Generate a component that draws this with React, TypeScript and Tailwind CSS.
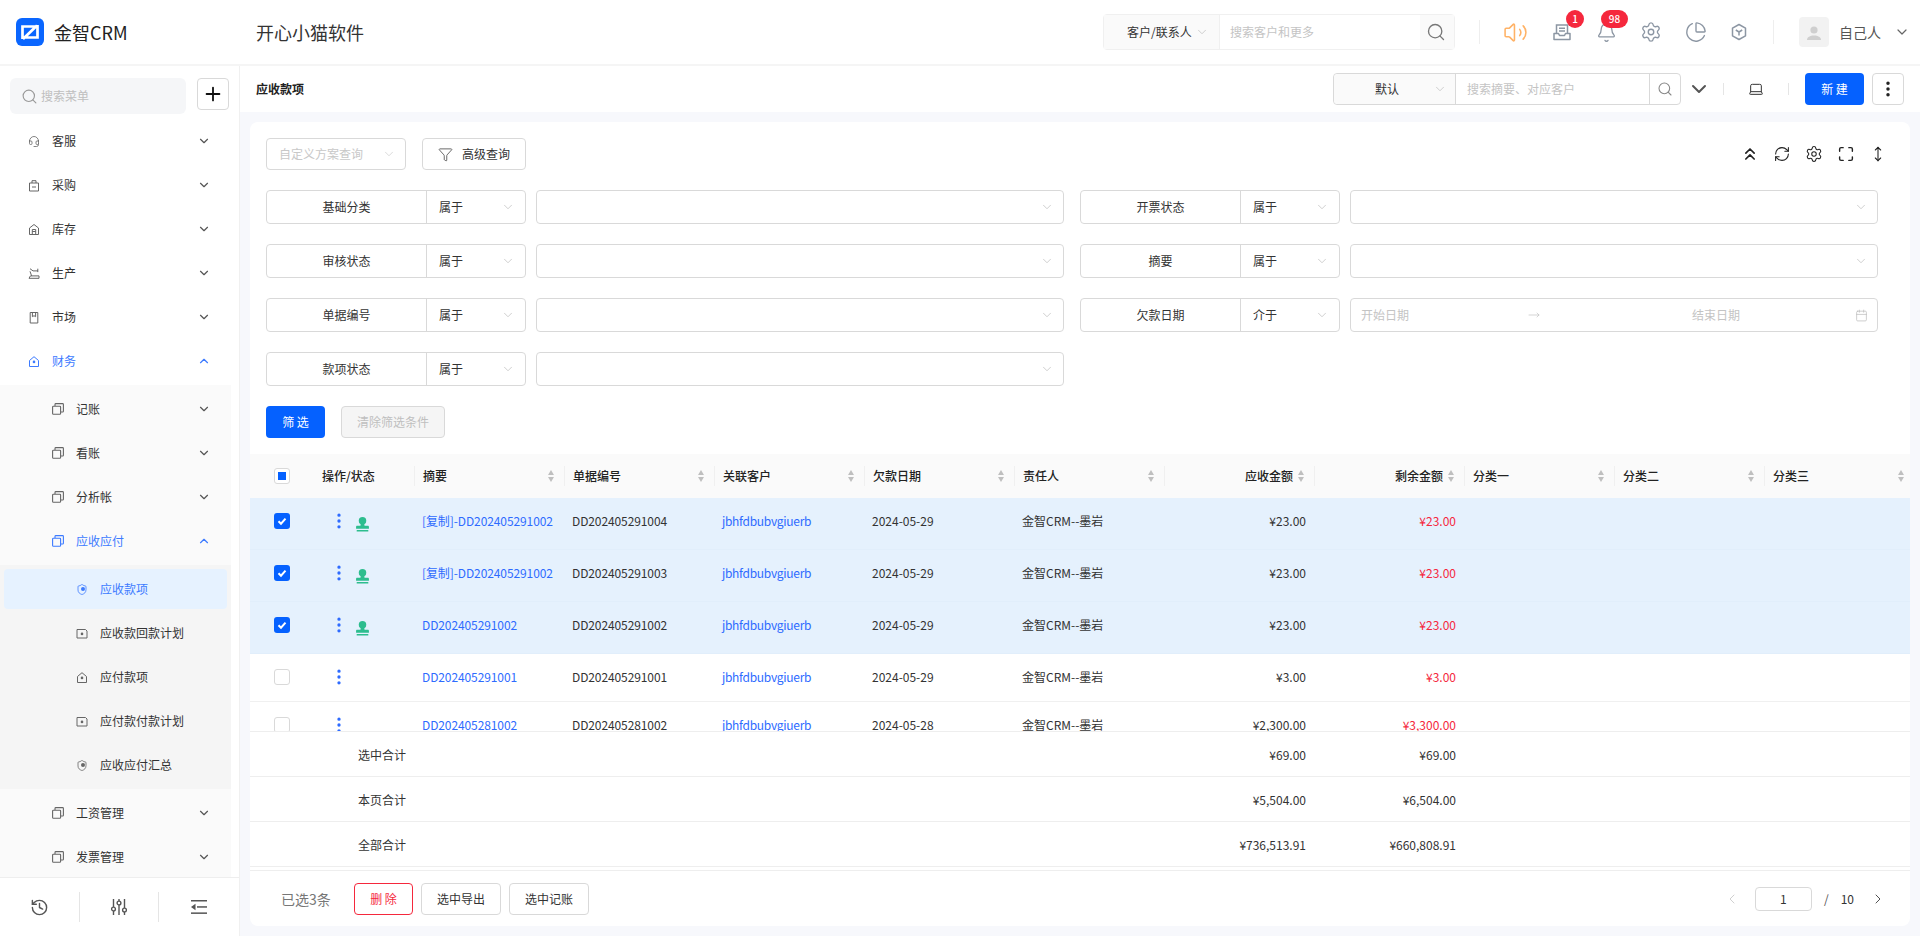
import {
  Bell,
  Calendar,
  ChevronDown,
  ChevronLeft,
  ChevronRight,
  ChevronUp,
  ChevronsUp,
  EllipsisVertical,
  Funnel,
  Headset,
  History,
  Laptop,
  Maximize,
  MoveRight,
  MoveVertical,
  PieChart,
  Plus,
  RefreshCw,
  Search,
  Settings,
  Shield,
  Volume2,
} from 'lucide-react';
import type { ReactNode } from 'react';

function MenuSvg({ d, dot }: { d: string; dot?: boolean }) {
  return (
    <svg viewBox="0 0 12 12" fill="none" stroke="currentColor" strokeWidth="1" strokeLinejoin="round" className="h-[13px] w-[13px]">
      <path d={d} />
      {dot && <circle cx="6" cy="6.4" r="1.3" fill="currentColor" stroke="none" />}
    </svg>
  );
}

const bagPath = 'M1.5 3.5h9v8h-9zM4 3.5V1.2h4v2.3M4 7.5h4';
const storePath = 'M1.5 4.5L6 1l4.5 3.5V11h-9zM4.3 11V6h3.4v5M4.3 8h3.4';
const armPath = 'M2 1.2l3 2.2h5M9.8 1.2v3.4M2 3.8l1.6 4.6M1 10.8h10V8.4H2.4z';
const marketPath = 'M2.2 1h7.6v10.5H2.2zM4.4 1v4.2L6 4.2l1.6 1V1';
const housePath = 'M1.5 5L6 1.2 10.5 5v6h-9z';
const planPath = 'M1 2h8.5L11 3.5v7H1z';

function CopyIcon({ className }: { className?: string }) {
  return (
    <svg viewBox="0 0 12 12" fill="none" stroke="currentColor" strokeWidth="1.1" className={className}>
      <rect x="0.6" y="3.2" width="8" height="8" rx="0.8" />
      <path d="M3 3V1.4c0-.4.3-.8.8-.8h6.8c.4 0 .8.4.8.8v6.8c0 .5-.4.8-.8.8H9" />
    </svg>
  );
}

function ShieldDot() {
  return (
    <div className="relative h-[13px] w-[13px]">
      <Shield className="h-full w-full" strokeWidth={1.6} />
      <span className="absolute top-[4px] left-[4.5px] h-1 w-1 rounded-full bg-current" />
    </div>
  );
}

function StampIcon() {
  return (
    <svg viewBox="0 0 12 14" fill="#2dbd8e" className="h-[15px] w-[13px]">
      <circle cx="6" cy="3.6" r="3.5" />
      <path d="M4.4 6h3.2l.3 2.2H11c.6 0 1 .4 1 1v1.8H0V9.2c0-.6.4-1 1-1h3.1z" />
      <rect x="0.5" y="12.1" width="11" height="1.5" rx="0.5" />
    </svg>
  );
}

function CubeIcon({ className }: { className?: string }) {
  return (
    <svg viewBox="0 0 18 18" fill="none" stroke="currentColor" strokeWidth="1.5" className={className}>
      <path d="M9 1.5l6.5 3.7v7.6L9 16.5l-6.5-3.7V5.2z" strokeLinejoin="round" />
      <path d="M5.8 7L9 9l3.2-2M9 9v3.5" />
    </svg>
  );
}

function InboxIcon({ className }: { className?: string }) {
  return (
    <svg viewBox="0 0 18 18" fill="none" stroke="currentColor" strokeWidth="1.5" className={className}>
      <path d="M3.5 10V2h11v8" />
      <path d="M6 5.2h6M6 8h6" />
      <path d="M1 10.5h4.5l1 2h5l1-2H17v6H1z" strokeLinejoin="round" />
    </svg>
  );
}

function SliderKnobs() {
  return (
    <svg viewBox="0 0 16 18" fill="none" stroke="currentColor" strokeWidth="1.4" className="h-[18px] w-4">
      <path d="M2.5 1v8M2.5 13v4M8 1v2M8 7v10M13.5 1v9M13.5 14v3" />
      <circle cx="2.5" cy="11" r="1.9" />
      <circle cx="8" cy="5" r="1.9" />
      <circle cx="13.5" cy="12" r="1.9" />
    </svg>
  );
}

function CollapseIcon() {
  return (
    <svg viewBox="0 0 16 14" className="h-[14px] w-4" fill="currentColor">
      <rect y="0" width="16" height="1.5" />
      <rect x="6" y="6.2" width="10" height="1.5" />
      <rect y="12.4" width="16" height="1.5" />
      <path d="M0 7l4.5-3.2v6.4z" />
    </svg>
  );
}

function Logo() {
  return (
    <svg viewBox="0 0 28 28" className="h-7 w-7">
      <rect width="28" height="28" rx="6" fill="#0a66ff" />
      <path d="M6.5 21V8.5h13M21.5 7v12.5H9M21 7.5L7 21" fill="none" stroke="#fff" strokeWidth="2.7" />
    </svg>
  );
}

function SortIcon() {
  return (
    <span className="flex w-[7px] shrink-0 flex-col gap-[2px]">
      <span className="h-0 w-0 border-x-[3.5px] border-b-[5px] border-x-transparent border-b-[#bfbfbf]" />
      <span className="h-0 w-0 border-x-[3.5px] border-t-[5px] border-x-transparent border-t-[#bfbfbf]" />
    </span>
  );
}

type SideItem = { label: string; icon: ReactNode; open?: boolean; active?: boolean };

const topMenu: SideItem[] = [
  { label: '客服', icon: <Headset className="h-[13px] w-[13px]" strokeWidth={1.6} /> },
  { label: '采购', icon: <MenuSvg d={bagPath} /> },
  { label: '库存', icon: <MenuSvg d={storePath} /> },
  { label: '生产', icon: <MenuSvg d={armPath} /> },
  { label: '市场', icon: <MenuSvg d={marketPath} /> },
];

const deepMenu: SideItem[] = [
  { label: '应收款项', icon: <ShieldDot />, active: true },
  { label: '应收款回款计划', icon: <MenuSvg d={planPath} dot /> },
  { label: '应付款项', icon: <MenuSvg d={housePath} dot /> },
  { label: '应付款付款计划', icon: <MenuSvg d={planPath} dot /> },
  { label: '应收应付汇总', icon: <ShieldDot /> },
];

function MenuRow({ item, indent, open, active }: { item: SideItem; indent: string; open?: boolean; active?: boolean }) {
  const Chevron = open ? ChevronUp : ChevronDown;
  return (
    <div className={`flex h-11 w-[231px] shrink-0 items-center ${indent} ${active ? 'text-[#3d7bff]' : 'text-[#333]'}`}>
      <span className={`flex w-[12px] justify-center ${active ? '' : 'text-[#666]'}`}>{item.icon}</span>
      <span className="ml-[12px]">{item.label}</span>
      <Chevron className={`ml-auto mr-[20px] h-[14px] w-[14px] ${active ? '' : 'text-[#555]'}`} strokeWidth={2} />
    </div>
  );
}

function Sidebar() {
  return (
    <aside className="flex w-[240px] shrink-0 flex-col border-r border-[#f0f0f0] bg-white">
      <div className="flex h-[53px] shrink-0 items-start gap-[11px] pt-3 pl-[10px]">
        <div className="flex h-9 w-[176px] items-center gap-[3px] rounded-md bg-[#f5f6f8] pl-[11px] text-[#bfbfbf]">
          <Search className="h-[17px] w-[17px] text-[#999]" strokeWidth={1.6} />
          <span>搜索菜单</span>
        </div>
        <div className="flex h-8 w-8 items-center justify-center rounded border border-[#d9d9d9]">
          <Plus className="h-[22px] w-[22px] text-[#111]" strokeWidth={2} />
        </div>
      </div>
      <div className="h-[758px] overflow-hidden">
        {topMenu.map((m) => (
          <MenuRow key={m.label} item={m} indent="pl-[28px]" />
        ))}
        <MenuRow item={{ label: '财务', icon: <MenuSvg d={housePath} dot /> }} indent="pl-[28px]" open active />
        <div className="mt-[2px] w-[231px] bg-[#fafafa] py-[2px]">
          {['记账', '看账', '分析帐'].map((label) => (
            <MenuRow key={label} item={{ label, icon: <CopyIcon className="h-3 w-3" /> }} indent="pl-[52px]" />
          ))}
          <MenuRow item={{ label: '应收应付', icon: <CopyIcon className="h-3 w-3" /> }} indent="pl-[52px]" open active />
          <div className="my-[2px] bg-[#f5f5f5] py-[2px]">
            {deepMenu.map((m) => (
              <div key={m.label} className="relative">
                {m.active && <div className="absolute inset-x-[4px] top-[2px] bottom-[2px] rounded bg-[#e6f2ff]" />}
                <div className={`relative flex h-11 items-center pl-[76px] ${m.active ? 'text-[#3d7bff]' : 'text-[#333]'}`}>
                  <span className={`flex w-[12px] justify-center ${m.active ? '' : 'text-[#666]'}`}>{m.icon}</span>
                  <span className="ml-[12px]">{m.label}</span>
                </div>
              </div>
            ))}
          </div>
          {['工资管理', '发票管理'].map((label) => (
            <MenuRow key={label} item={{ label, icon: <CopyIcon className="h-3 w-3" /> }} indent="pl-[52px]" />
          ))}
        </div>
      </div>
      <div className="grid h-[59px] grid-cols-3 items-center border-t border-[#eee] text-[#555]">
        <div className="flex h-[30px] items-center justify-center border-r border-[#e5e5e5]">
          <History className="h-[19px] w-[19px]" strokeWidth={1.8} />
        </div>
        <div className="flex h-[30px] items-center justify-center border-r border-[#e5e5e5]">
          <SliderKnobs />
        </div>
        <div className="flex h-[30px] items-center justify-center">
          <CollapseIcon />
        </div>
      </div>
    </aside>
  );
}

function TopBar() {
  return (
    <header className="flex h-[66px] shrink-0 items-center border-b-2 border-[#f5f5f5] bg-white">
      <div className="ml-4 flex w-[240px] items-center gap-[10px]">
        <Logo />
        <span className="text-[18px] text-[#222]">金智CRM</span>
      </div>
      <span className="text-[18px] text-[#333]">开心小猫软件</span>
      <div className="ml-auto flex h-9 w-[352px] rounded-sm border border-[#f0f0f0]">
        <div className="flex w-[115px] items-center bg-[#fafafa] pl-[23px] text-[#333]">
          <span>客户/联系人</span>
          <ChevronDown className="ml-[3px] h-[14px] w-[14px] text-[#bbb]" strokeWidth={1.2} />
        </div>
        <div className="flex flex-1 items-center border-l border-[#f0f0f0] pl-[10px] text-[#c4c4c4]">搜索客户和更多</div>
        <div className="flex w-[34px] items-center justify-center bg-[#fafafa] pr-[2px]">
          <Search className="h-[20px] w-[20px] text-[#777]" strokeWidth={1.6} />
        </div>
      </div>
      <span className="ml-[24px] h-6 w-px bg-[#eee]" />
      <Volume2 className="ml-[23px] h-[25px] w-[25px] text-[#ffb266]" strokeWidth={1.5} />
      <div className="relative ml-[25px]">
        <InboxIcon className="h-[18px] w-[18px] text-[#8c96a3]" />
        <span className="absolute -top-[13px] left-[13px] flex h-[18px] w-[18px] items-center justify-center rounded-full bg-[#f5283d] text-[10px] font-medium text-white">
          1
        </span>
      </div>
      <div className="relative ml-[25px]">
        <Bell className="h-[21px] w-[21px] text-[#8c96a3]" strokeWidth={1.5} />
        <span className="absolute -top-[12px] left-[5px] flex h-[18px] w-[27px] items-center justify-center rounded-full bg-[#f5283d] text-[10px] font-medium text-white">
          98
        </span>
      </div>
      <Settings className="ml-[23px] h-[22px] w-[22px] text-[#8c96a3]" strokeWidth={1.5} />
      <PieChart className="ml-[23px] h-[22px] w-[22px] text-[#8c96a3]" strokeWidth={1.5} />
      <CubeIcon className="ml-[23px] h-[18px] w-[18px] text-[#8c96a3]" />
      <span className="ml-[25px] h-6 w-px bg-[#eee]" />
      <div className="ml-[25px] flex h-[30px] w-[30px] items-end justify-center rounded bg-[#f2f2f2] pb-[6px]">
        <svg viewBox="0 0 16 16" fill="#cfcfcf" className="h-4 w-4">
          <circle cx="8" cy="5" r="3.6" />
          <path d="M1 15c0-3 3-4.6 7-4.6s7 1.6 7 4.6z" />
        </svg>
      </div>
      <span className="ml-[10px] text-sm text-[#555]">自己人</span>
      <ChevronDown className="ml-[13px] mr-[10px] h-[16px] w-[16px] text-[#666]" strokeWidth={1.8} />
    </header>
  );
}

function ToolBar() {
  return (
    <div className="flex h-[46px] shrink-0 items-center bg-white pl-4 pr-4">
      <span className="font-bold text-[#222]">应收款项</span>
      <div className="ml-auto flex h-8 w-[348px] rounded border border-[#d9d9d9]">
        <div className="relative flex w-[121px] items-center justify-center rounded-l bg-[#fafafa] pr-[15px] text-[#333]">
          默认
          <ChevronDown className="absolute right-[8px] h-[14px] w-[14px] text-[#bbb]" strokeWidth={1.2} />
        </div>
        <div className="flex flex-1 items-center border-l border-[#d9d9d9] pl-[11px] text-[#c4c4c4]">搜索摘要、对应客户</div>
        <div className="flex w-[31px] items-center justify-center border-l border-[#d9d9d9]">
          <Search className="h-[16px] w-[16px] text-[#888]" strokeWidth={1.6} />
        </div>
      </div>
      <ChevronDown className="ml-[6px] h-6 w-6 text-[#555]" strokeWidth={2} />
      <span className="ml-[12px] h-3 w-px bg-[#e5e5e5]" />
      <Laptop className="ml-[24px] h-4 w-4 text-[#333]" strokeWidth={1.5} />
      <span className="ml-[24px] h-3 w-px bg-[#e5e5e5]" />
      <div className="ml-[16px] flex h-8 w-[59px] items-center justify-center rounded bg-[#0561ff] text-white">新 建</div>
      <div className="ml-2 flex h-8 w-8 items-center justify-center rounded border border-[#d9d9d9]">
        <EllipsisVertical className="h-[20px] w-[20px] text-[#222]" strokeWidth={2.2} />
      </div>
    </div>
  );
}

function FilterField({ label, op = '属于', date }: { label: string; op?: string; date?: boolean }) {
  return (
    <div className="flex h-[34px] text-[#333]">
      <div className="flex w-[260px] rounded border border-[#d9d9d9]">
        <div className="flex w-[160px] items-center justify-center border-r border-[#d9d9d9]">{label}</div>
        <div className="flex flex-1 items-center justify-between pl-3 pr-[10px]">
          {op}
          <ChevronDown className="h-[14px] w-[14px] text-[#bbb]" strokeWidth={1.2} />
        </div>
      </div>
      <div className="ml-[10px] flex flex-1 items-center justify-between rounded border border-[#d9d9d9] pl-[10px] pr-[9px] text-[#c4c4c4]">
        {date ? (
          <>
            <span>开始日期</span>
            <MoveRight className="ml-[119px] h-3 w-3 text-[#bbb]" strokeWidth={1.2} />
            <span className="ml-[152px]">结束日期</span>
            <Calendar className="ml-auto h-[13px] w-[13px] text-[#bbb]" strokeWidth={1.3} />
          </>
        ) : (
          <ChevronDown className="ml-auto h-[14px] w-[14px] text-[#bbb]" strokeWidth={1.2} />
        )}
      </div>
    </div>
  );
}

function Filters() {
  return (
    <div className="shrink-0 pt-4 pl-4 pr-8 pb-4">
      <div className="flex h-8 items-center">
        <div className="flex h-8 w-[140px] items-center justify-between rounded-sm border border-[#d9d9d9] pl-3 pr-[9px] text-[#c8c8c8]">
          自定义方案查询
          <ChevronDown className="h-[14px] w-[14px] text-[#ccc]" strokeWidth={1.2} />
        </div>
        <div className="ml-4 flex h-8 w-[104px] items-center justify-center gap-[9px] rounded border border-[#d9d9d9] text-[#333]">
          <Funnel className="h-[15px] w-[15px] text-[#555]" strokeWidth={1.4} />
          高级查询
        </div>
        <div className="-mr-[10px] ml-auto flex items-center gap-[12px] text-[#222]">
          <ChevronsUp className="h-5 w-5" strokeWidth={2} />
          <RefreshCw className="h-5 w-5 scale-[0.85]" strokeWidth={1.5} />
          <Settings className="h-5 w-5 scale-[0.9]" strokeWidth={1.4} />
          <Maximize className="h-5 w-5 scale-[0.85]" strokeWidth={2} />
          <MoveVertical className="h-5 w-5 scale-[0.8]" strokeWidth={1.6} />
        </div>
      </div>
      <div className="mt-5 grid grid-cols-[798px_798px] gap-x-4 gap-y-5">
        <FilterField label="基础分类" />
        <FilterField label="开票状态" />
        <FilterField label="审核状态" />
        <FilterField label="摘要" />
        <FilterField label="单据编号" />
        <FilterField label="欠款日期" op="介于" date />
        <FilterField label="款项状态" />
      </div>
      <div className="mt-5 flex gap-4">
        <div className="flex h-8 w-[59px] items-center justify-center rounded bg-[#0561ff] text-white">筛 选</div>
        <div className="flex h-8 w-[104px] items-center justify-center rounded border border-[#d9d9d9] bg-[#f5f5f5] text-[#bfbfbf]">
          清除筛选条件
        </div>
      </div>
    </div>
  );
}

const headers = [
  { label: '摘要' },
  { label: '单据编号' },
  { label: '关联客户' },
  { label: '欠款日期' },
  { label: '责任人' },
  { label: '应收金额', right: true },
  { label: '剩余金额', right: true },
  { label: '分类一' },
  { label: '分类二' },
  { label: '分类三' },
];

const rows = [
  { title: '[复制]-DD202405291002', no: 'DD202405291004', date: '2024-05-29', due: '¥23.00', left: '¥23.00', checked: true },
  { title: '[复制]-DD202405291002', no: 'DD202405291003', date: '2024-05-29', due: '¥23.00', left: '¥23.00', checked: true },
  { title: 'DD202405291002', no: 'DD202405291002', date: '2024-05-29', due: '¥23.00', left: '¥23.00', checked: true },
  { title: 'DD202405291001', no: 'DD202405291001', date: '2024-05-29', due: '¥3.00', left: '¥3.00', checked: false },
  { title: 'DD202405281002', no: 'DD202405281002', date: '2024-05-28', due: '¥2,300.00', left: '¥3,300.00', checked: false },
];

const totals = [
  { label: '选中合计', due: '¥69.00', left: '¥69.00' },
  { label: '本页合计', due: '¥5,504.00', left: '¥6,504.00' },
  { label: '全部合计', due: '¥736,513.91', left: '¥660,808.91' },
];

function Checkbox({ checked }: { checked: boolean }) {
  if (checked) {
    return (
      <span className="flex h-4 w-4 items-center justify-center rounded-[3px] bg-[#0561ff]">
        <svg viewBox="0 0 12 12" className="h-3 w-3" fill="none" stroke="#fff" strokeWidth="2">
          <path d="M2.5 6.2l2.5 2.5 4.5-5" />
        </svg>
      </span>
    );
  }
  return <span className="h-4 w-4 rounded-[3px] border border-[#d9d9d9] bg-white" />;
}

function DataTable() {
  return (
    <div className="flex-1 overflow-hidden">
      <div className="flex h-11 w-[1664px] items-center bg-[#fafafa] font-medium text-[#222]">
        <div className="flex w-[64px] justify-center">
          <span className="flex h-4 w-4 items-center justify-center rounded-[3px] border border-[#d9d9d9] bg-white">
            <span className="h-2 w-2 bg-[#0561ff]" />
          </span>
        </div>
        <div className="w-[100px] pl-2">操作/状态</div>
        {headers.map((h) => (
          <div key={h.label} className="w-[150px] shrink-0">
            <div
              className={`flex h-5 items-center border-l border-[#f0f0f0] pl-2 pr-[9px] ${h.right ? 'justify-end gap-[5px]' : 'justify-between'}`}
            >
              {h.label}
              <SortIcon />
            </div>
          </div>
        ))}
      </div>
      <div className="h-[234px] overflow-hidden border-b border-[#eee]">
        {rows.map((r, i) => (
          <div
            key={r.no}
            className={`flex w-[1664px] border-b ${i > 2 ? 'h-[48px]' : 'h-[52px]'} ${r.checked ? 'border-[#e1eefb] bg-[#e5f1fd]' : 'border-[#f0f0f0] bg-white'}`}
          >
            <div className="flex h-[46px] w-[64px] items-center justify-center">
              <Checkbox checked={r.checked} />
            </div>
            <div className="flex h-[46px] w-[100px] items-center text-[#2e6bff]">
              <EllipsisVertical className="ml-[15px] h-5 w-5" strokeWidth={2} />
              {r.checked && (
                <span className="ml-[7px] mt-[6px]">
                  <StampIcon />
                </span>
              )}
            </div>
            <div className="flex h-[46px] w-[150px] items-center pl-2 tracking-[-0.1px] text-[#2e6bff]">{r.title}</div>
            <div className="flex h-[46px] w-[150px] items-center pl-2 tracking-[-0.1px] text-[#333]">{r.no}</div>
            <div className="flex h-[46px] w-[150px] items-center pl-2 tracking-[-0.3px] text-[#2e6bff]">jbhfdbubvgiuerb</div>
            <div className="flex h-[46px] w-[150px] items-center pl-2 text-[#333]">{r.date}</div>
            <div className="flex h-[46px] w-[150px] items-center pl-2 text-[#333]">金智CRM--墨岩</div>
            <div className="flex h-[46px] w-[150px] items-center justify-end pr-2 text-[#333]">{r.due}</div>
            <div className="flex h-[46px] w-[150px] items-center justify-end pr-2 text-[#f5283d]">{r.left}</div>
          </div>
        ))}
      </div>
      {totals.map((t) => (
        <div key={t.label} className="flex h-[45px] items-center border-b border-[#eee] pt-[2px] text-[#333]">
          <div className="w-[914px] pl-[108px]">{t.label}</div>
          <div className="w-[150px] pr-2 text-right">{t.due}</div>
          <div className="w-[150px] pr-2 text-right">{t.left}</div>
        </div>
      ))}
    </div>
  );
}

function BottomBar() {
  return (
    <div className="flex h-14 shrink-0 items-center border-t border-[#eee] pl-[31px] pr-[24px] text-[#333]">
      <span className="w-[73px] text-sm text-[#777]">已选3条</span>
      <div className="flex h-8 w-[59px] items-center justify-center rounded border border-[#f5283d] text-[#f5283d]">删 除</div>
      <div className="ml-2 flex h-8 w-20 items-center justify-center rounded border border-[#d9d9d9]">选中导出</div>
      <div className="ml-2 flex h-8 w-20 items-center justify-center rounded border border-[#d9d9d9]">选中记账</div>
      <div className="ml-auto flex items-center">
        <ChevronLeft className="h-4 w-4 text-[#ccc]" strokeWidth={1.4} />
        <div className="ml-[15px] flex h-6 w-[57px] items-center justify-center rounded border border-[#d9d9d9]">1</div>
        <span className="ml-[12px] text-[#555]">/</span>
        <span className="ml-[12px]">10</span>
        <ChevronRight className="ml-[16px] h-4 w-4 text-[#444]" strokeWidth={1.4} />
      </div>
    </div>
  );
}

export default function App() {
  return (
    <div className="flex h-[936px] w-[1920px] flex-col overflow-hidden bg-white font-['Noto_Sans_CJK_SC','Noto_Sans',sans-serif] text-xs">
      <TopBar />
      <div className="flex min-h-0 flex-1">
        <Sidebar />
        <main className="flex min-w-0 flex-1 flex-col bg-[#f7f8fc]">
          <ToolBar />
          <div className="m-[10px] flex min-h-0 flex-1 flex-col overflow-hidden rounded-lg bg-white">
            <Filters />
            <DataTable />
            <BottomBar />
          </div>
        </main>
      </div>
    </div>
  );
}
